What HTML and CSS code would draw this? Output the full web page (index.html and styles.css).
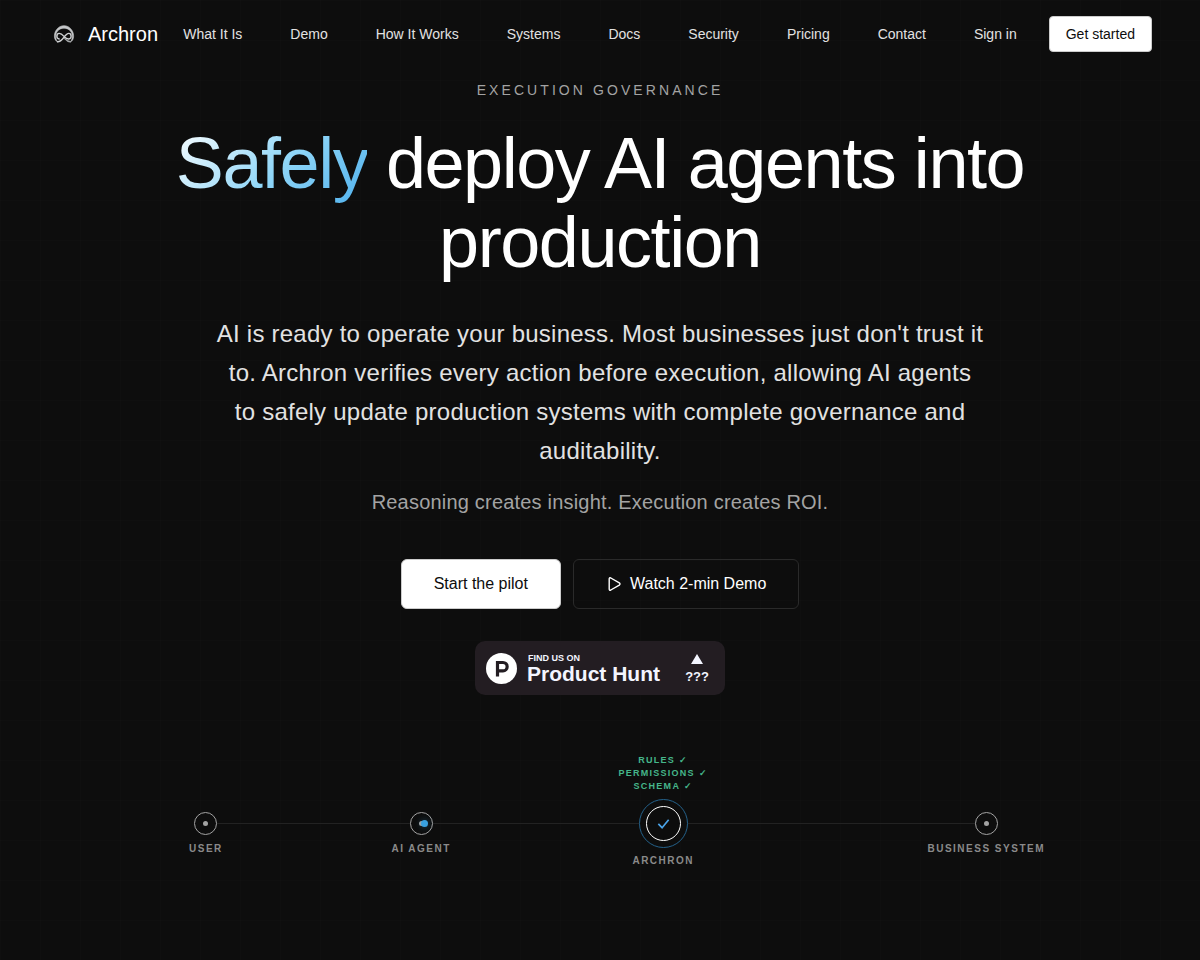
FILE: index.html
```
<!DOCTYPE html>
<html lang="en">
<head>
    <meta charset="UTF-8">
    <meta name="viewport" content="width=device-width, initial-scale=1.0">
    <title>Archron</title>
    <link rel="stylesheet" href="styles.css">
</head>
<body>

    <header class="header">
        <a class="brand" href="#">
            <svg class="brand-icon" viewBox="0 0 24 24" fill="none" stroke-linecap="round">
                <path d="M5.500 19.800C1.800 18.600 1.400 12 4.300 8C8 2.200 16 2.200 19.700 8C22.600 12 22.200 18.600 18.500 19.800C21 16.500 20.800 12 18.400 9C15 5.200 9 5.200 5.600 9C3.200 12 3 16.500 5.500 19.800Z" fill="#c4c6c8" stroke="#c4c6c8" stroke-width="0.600"/>
                <path d="M5.500 19.800C7.800 20 9.800 18 12 15.200C13.800 12.800 15.200 11.400 16.800 11.400C19.800 11.400 20 16.800 16.800 17C15.200 17.200 13.600 16 12 14.400C10.400 12.600 8.800 11.400 7.200 11.400C4.200 11.400 4 16.800 7.200 17" stroke="#d0d2d4" stroke-width="1.400"/>
                <path d="M18.500 19.800C16.200 20 14.200 18.200 12.800 16.600" stroke="#a5a8aa" stroke-width="1.400"/>
            </svg>
            <span>Archron</span>
        </a>
        <nav class="nav">
            <a href="#">What It Is</a>
            <a href="#">Demo</a>
            <a href="#">How It Works</a>
            <a href="#">Systems</a>
            <a href="#">Docs</a>
            <a href="#">Security</a>
            <a href="#">Pricing</a>
            <a href="#">Contact</a>
            <a href="#">Sign in</a>
        </nav>
        <button type="button" class="btn-small">Get started</button>
    </header>

    <main class="hero">
        <p class="eyebrow">Execution Governance</p>
        <h1><span class="accent">Safely</span> deploy AI agents into production</h1>
        <p class="lead">AI is ready to operate your business. Most businesses just don't trust it to. Archron verifies every action before execution, allowing AI agents to safely update production systems with complete governance and auditability.</p>
        <p class="tagline">Reasoning creates insight. Execution creates ROI.</p>

        <div class="actions">
            <button type="button" class="btn btn-primary">Start the pilot</button>
            <button type="button" class="btn btn-outline">
                <svg class="play" viewBox="0 0 16 16" fill="none" stroke="currentColor" stroke-width="1.400" stroke-linejoin="round">
                    <path d="M3.200 3Q3.200 1.200 4.800 2L13.300 6.900Q14.700 8 13.300 9.100L4.800 14Q3.200 14.800 3.200 13Z"/>
                </svg>
                Watch 2-min Demo
            </button>
        </div>

        <a class="ph-badge" href="#">
            <svg class="ph-logo" viewBox="0 0 31 31">
                <circle cx="15.500" cy="15.500" r="15.500" fill="#fff"/>
                <path d="M11.500 23.500V9.500H17A4 4 0 0 1 17 17.800H11.500" fill="none" stroke="#231d22" stroke-width="3.200"/>
            </svg>
            <span class="ph-text">
                <span class="ph-small">FIND US ON</span>
                <span class="ph-name">Product Hunt</span>
            </span>
            <span class="ph-votes">
                <svg class="ph-arrow" viewBox="0 0 12 10"><path d="M6 0L12 10H0Z" fill="#f3f5ff"/></svg>
                <span>???</span>
            </span>
        </a>

        <div class="flow">
            <div class="step">
                <span class="node"></span>
                <span class="label">User</span>
            </div>
            <span class="gap gap-short"></span>
            <div class="step">
                <span class="node"><span class="pulse"></span></span>
                <span class="label">AI Agent</span>
            </div>
            <span class="gap"></span>
            <div class="step">
                <ul class="checks">
                    <li>Rules ✓</li>
                    <li>Permissions ✓</li>
                    <li>Schema ✓</li>
                </ul>
                <span class="gate">
                    <svg viewBox="0 0 16 16" fill="none" stroke="#4aa3e8" stroke-width="1.800"><path d="M2.500 8.500L6.500 12.500L13.500 4"/></svg>
                </span>
                <span class="label">Archron</span>
            </div>
            <span class="gap gap-long"></span>
            <div class="step">
                <span class="node"></span>
                <span class="label">Business System</span>
            </div>
        </div>
    </main>

</body>
</html>
```
FILE: styles.css
```
* { margin: 0; padding: 0; box-sizing: border-box; }
body {
    min-height: 100vh;
    background-color: #0d0d0d;
    background-image: linear-gradient(rgba(255, 255, 255, 0.006) 1px, transparent 1px), linear-gradient(90deg, rgba(255, 255, 255, 0.006) 1px, transparent 1px);
    background-size: 40px 40px;
    color: #fff;
    font-family: "Liberation Sans", Arial, sans-serif;
}
a { color: inherit; text-decoration: none; }
button { font-family: inherit; cursor: pointer; }

/* Header */
.header { display: flex; align-items: center; height: 68px; padding: 0 48px; }
.brand { display: flex; align-items: center; gap: 8px; margin-right: auto; font-size: 20px; }
.brand-icon { width: 32px; height: 32px; padding: 4px; }
.nav { display: flex; gap: 48px; margin-right: 32px; font-size: 14px; color: #e2e2e2; }
.btn-small { height: 36px; padding: 0 16px; border: 1px solid #ccc; border-radius: 4px; background: #fff; color: #0d0d0d; font-size: 14px; }

/* Hero */
.hero { display: flex; flex-direction: column; align-items: center; padding: 12px 24px 80px; text-align: center; }
.eyebrow { font-size: 14px; line-height: 20px; letter-spacing: 0.22em; text-transform: uppercase; color: #a3a3a3; }
h1 { max-width: 900px; margin-top: 24px; font-size: 72px; font-weight: 400; line-height: 79px; letter-spacing: -0.02em; }
.accent { background: linear-gradient(135deg, #fff 0%, #8fd6f8 55%, #4fb0ec 100%); -webkit-background-clip: text; background-clip: text; color: transparent; }
.lead { max-width: 768px; margin-top: 32px; font-size: 24px; line-height: 39px; letter-spacing: 0.01em; color: #e2e2e2; }
.tagline { margin-top: 16px; font-size: 20px; line-height: 32px; letter-spacing: 0.01em; color: #a3a3a3; }

.actions { display: flex; gap: 12px; margin-top: 41px; }
.btn { display: flex; align-items: center; gap: 8px; height: 50px; padding: 0 32px; border-radius: 6px; font-size: 16px; }
.btn-primary { border: 1px solid #ccc; background: #fff; color: #0d0d0d; }
.btn-outline { border: 1px solid #2a2a2a; background: transparent; color: #fff; }
.play { width: 16px; height: 16px; }

/* Product Hunt badge */
.ph-badge { display: flex; align-items: center; width: 250px; height: 54px; margin-top: 32px; padding: 0 16px 0 11px; border-radius: 10px; background: #231d22; color: #f3f5ff; font-weight: bold; }
.ph-logo { width: 31px; height: 31px; }
.ph-text { display: flex; flex-direction: column; margin-left: 10px; padding-top: 2px; text-align: left; }
.ph-small { padding-left: 1px; font-size: 9px; line-height: 10px; }
.ph-name { font-size: 21px; line-height: 22px; }
.ph-votes { display: flex; flex-direction: column; align-items: center; gap: 5px; margin-left: auto; padding-top: 3px; font-size: 13px; line-height: 16px; }
.ph-arrow { width: 12px; height: 10px; }

/* Execution flow */
.flow { position: relative; display: flex; align-items: flex-start; width: 100%; max-width: 856px; margin: 104px 0 0 34px; }
.flow::before { content: ""; position: absolute; top: 24px; left: 24px; right: 64px; height: 1px; background: #222; }
.step { position: relative; display: flex; flex-direction: column; align-items: center; }
.gap { flex: 14 1 0; }
.gap-short { flex-grow: 13; }
.gap-long { flex-grow: 18; }
.node { position: relative; display: flex; align-items: center; justify-content: center; width: 23px; height: 23px; margin: 13px 0 6px; border: 1px solid #a3a3a3; border-radius: 50%; background: #0d0d0d; }
.node::before { content: ""; width: 5px; height: 5px; border-radius: 50%; background: #a3a3a3; }
.pulse { position: absolute; top: 7px; left: 10px; width: 7px; height: 7px; border-radius: 50%; background: #38a0e0; box-shadow: 0 0 6px rgba(56, 160, 224, 0.4); }
.gate { display: flex; align-items: center; justify-content: center; width: 49px; height: 49px; margin-bottom: 5px; border: 1px solid #24618a; border-radius: 50%; background: #0d0d0d; }
.gate svg { width: 35px; height: 35px; padding: 9px; border: 1px solid #fff; border-radius: 50%; }
.label { font-size: 10px; font-weight: bold; line-height: 16px; letter-spacing: 0.15em; text-transform: uppercase; color: #8a8a8a; white-space: nowrap; }
.checks { position: absolute; bottom: 100%; list-style: none; padding-bottom: 6px; color: #45b68a; font-size: 9px; font-weight: bold; line-height: 13px; letter-spacing: 0.14em; text-transform: uppercase; white-space: nowrap; }
```
